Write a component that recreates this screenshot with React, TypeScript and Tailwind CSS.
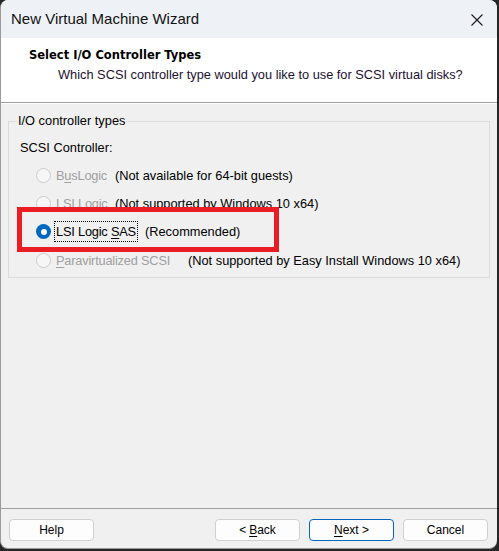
import React from "react";

const sans = "font-['Liberation_Sans',Arial,sans-serif]";

const controllers = [
  { pre: "B", key: "u", post: "sLogic", note: "(Not available for 64-bit guests)", labelW: "w-[61px]", selected: false },
  { pre: "LSI Logic", key: "", post: "", note: "(Not supported by Windows 10 x64)", labelW: "w-[61px]", selected: false },
  { pre: "LSI Logic ", key: "S", post: "AS", note: "(Recommended)", labelW: "w-[91px]", selected: true },
  { pre: "", key: "P", post: "aravirtualized SCSI", note: "(Not supported by Easy Install Windows 10 x64)", labelW: "w-[134px]", selected: false },
];

const Radio = ({ on }: { on: boolean }) =>
  on ? (
    <span className="w-[15px] h-[15px] rounded-full bg-[#0067c0] flex items-center justify-center shrink-0">
      <span className="w-[6px] h-[6px] rounded-full bg-white" />
    </span>
  ) : (
    <span className="w-[15px] h-[15px] rounded-full border border-[#cccccc] bg-[#f6f6f6] shrink-0" />
  );

const Button = ({ children, primary }: { children: React.ReactNode; primary?: boolean }) => (
  <button
    className={`w-[85px] h-[22px] rounded-[4px] border bg-[#fdfdfd] text-[12px] text-black flex items-center justify-center ${sans} ${
      primary ? "border-[#0067c0]" : "border-[#d0d0d0]"
    }`}
  >
    {children}
  </button>
);

export default function App() {
  return (
    <div className="w-[499px] h-[551px] bg-[#262626] overflow-hidden">
      <div className="relative w-[497px] h-[549px] rounded-[8px] overflow-hidden bg-[#f0f0f0] border-l border-b border-[#9a9a9a] flex flex-col">
        {/* title bar */}
        <div className="h-[38px] bg-[#eef2f6] flex items-center justify-between pl-[10px] pr-[14px] shrink-0">
          <span className={`text-[15px] text-[#111] ${sans}`}>New Virtual Machine Wizard</span>
          <svg width="12" height="12" viewBox="0 0 12 12" className="mt-[1px]">
            <path d="M0.5 0.5 L11.5 11.5 M11.5 0.5 L0.5 11.5" stroke="#1a1a1a" strokeWidth="1.1" fill="none" />
          </svg>
        </div>

        {/* header */}
        <div className="h-[64px] bg-white shrink-0 pt-[9px]">
          <div className="pl-[28px] h-[16px] leading-[16px] text-[11.5px] font-bold text-black font-['DejaVu_Sans',Verdana,sans-serif]">
            Select I/O Controller Types
          </div>
          <div className={`pl-[57px] mt-[4px] h-[16px] leading-[16px] text-[12.8px] text-[#1c1030] ${sans}`}>
            Which SCSI controller type would you like to use for SCSI virtual disks?
          </div>
        </div>
        <div className="h-px bg-[#a0a0a0] shrink-0" />
        <div className="h-px bg-white shrink-0" />

        {/* body */}
        <div className="flex-1 px-[7px] pt-[9px]">
          <fieldset className="border border-[#dcdcdc] h-[165px] pl-[11px]">
            <legend className={`ml-[-3px] px-[1px] text-[12.8px] leading-[16px] text-black ${sans}`}>I/O controller types</legend>
            <div className={`mt-[11px] h-[16px] leading-[16px] text-[12.8px] text-black ${sans}`}>SCSI Controller:</div>
            <div className="mt-[5.5px] pl-[16px]">
              {controllers.map((c) => (
                <div key={c.note} className={`h-[28.2px] flex items-center text-[12.8px] ${sans}`}>
                  <Radio on={c.selected} />
                  <span className={`${c.labelW} ml-[3px] shrink-0`}>
                    <span
                      className={`px-[1px] py-[2px] tracking-[-0.2px] ${
                        c.selected ? "text-black border border-dotted border-black" : "text-[#a0a0a0] border border-transparent"
                      }`}
                    >
                      {c.pre}
                      {c.key && <span className="underline underline-offset-2">{c.key}</span>}
                      {c.post}
                    </span>
                  </span>
                  <span className="text-black">{c.note}</span>
                </div>
              ))}
            </div>
          </fieldset>
        </div>

        {/* footer */}
        <div className="h-px bg-[#a0a0a0] shrink-0" />
        <div className="h-[39px] shrink-0 flex items-start pt-[10px] pl-[8px] pr-[9px]">
          <Button>Help</Button>
          <div className="flex-1" />
          <div className="flex gap-[9px]">
            <Button>
              &lt; <span className="underline underline-offset-2 ml-[3px]">B</span>ack
            </Button>
            <Button primary>
              <span className="underline underline-offset-2">N</span>ext &gt;
            </Button>
            <Button>Cancel</Button>
          </div>
        </div>

        {/* highlight annotation */}
        <div className="absolute left-[16px] top-[207px] w-[262px] h-[45px] border-[5px] border-[#ec1c24] pointer-events-none" />
      </div>
    </div>
  );
}
